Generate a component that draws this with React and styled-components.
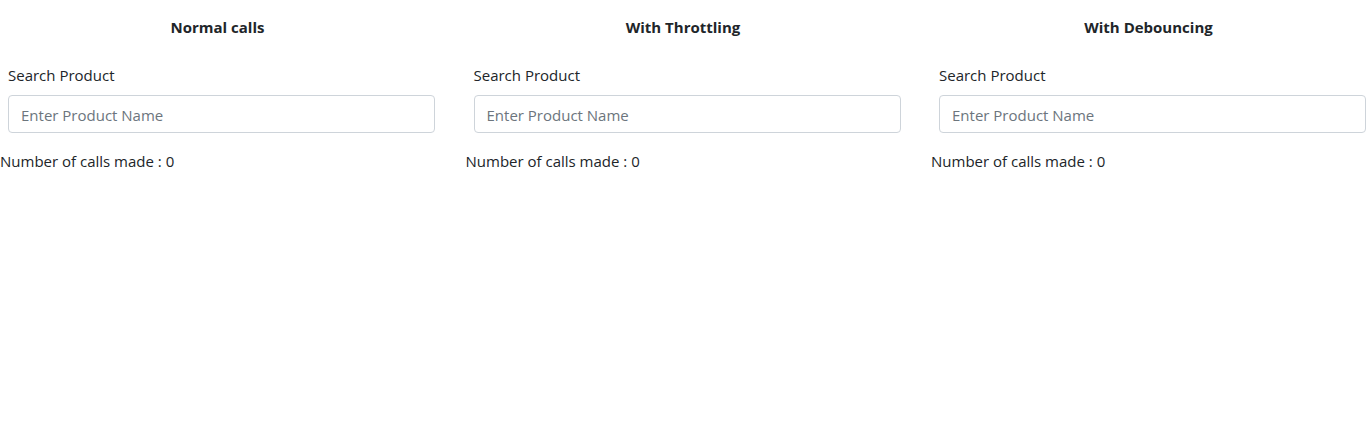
import React from 'react';
import styled, { createGlobalStyle } from 'styled-components';

const GlobalStyle = createGlobalStyle`
  html, body {
    margin: 0;
    padding: 0;
    background: #fff;
  }
  body {
    font-family: 'Open Sans', 'Noto Sans', sans-serif;
    font-size: 15px;
    color: #212529;
  }
  * {
    box-sizing: border-box;
  }
`

const panels = ['Normal calls', 'With Throttling', 'With Debouncing']

function App() {
  return (
    <>
      <GlobalStyle />
      <Row>
        {panels.map((title) => (
          <Column key={title}>
            <Heading>{title}</Heading>
            <Form>
              <Label>Search Product</Label>
              <Input placeholder='Enter Product Name' />
            </Form>
            <Counter>Number of calls made : 0</Counter>
          </Column>
        ))}
      </Row>
    </>
  )
}

export default App

const Row = styled.div`
  display: grid;
  grid-template-columns: repeat(3, 435px);
  column-gap: 30.5px;
  width: 1366px;
`

const Column = styled.div`
  display: flex;
  flex-direction: column;
`

const Heading = styled.h3`
  margin: 0;
  padding-top: 17px;
  height: 64px;
  text-align: center;
  font-size: 15px;
  font-weight: 700;
  line-height: 20px;
`

const Form = styled.div`
  display: flex;
  flex-direction: column;
  padding-left: 8px;
`

const Label = styled.label`
  line-height: 22px;
  margin-bottom: 9px;
`

const Input = styled.input`
  height: 38px;
  width: 100%;
  padding: 7px 12px 5px;
  border: 1px solid #ced4da;
  border-radius: 4px;
  font-family: inherit;
  font-size: 15px;
  color: #212529;
  &::placeholder {
    color: #6c757d;
  }
  &:focus {
    outline: none;
    border-color: #86b7fe;
  }
`

const Counter = styled.p`
  margin: 17px 0 0;
  line-height: 22px;
`
